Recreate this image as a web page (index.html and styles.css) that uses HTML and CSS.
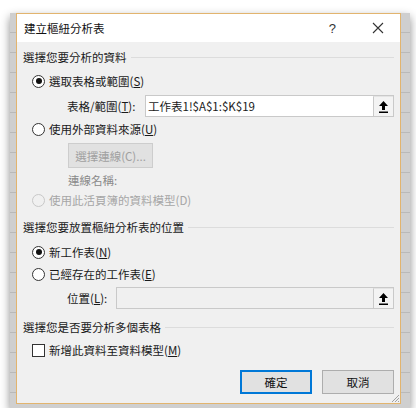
FILE: index.html
```html
<!DOCTYPE html>
<html lang="zh-Hant">
<head>
    <meta charset="UTF-8">
    <title>建立樞紐分析表</title>
    <link rel="stylesheet" href="styles.css">
</head>
<body>

    <div class="shot">
        <div class="dialog">
            <div class="titlebar">
                <span class="title">建立樞紐分析表</span>
                <span class="help">?</span>
                <svg class="close" width="12" height="12" viewBox="0 0 12 12">
                    <path d="M1 1 L11 11 M11 1 L1 11" stroke="#333" stroke-width="1.1" fill="none"/>
                </svg>
            </div>

            <div class="content">
                <div class="group"><span>選擇您要分析的資料</span></div>

                <div class="row r-sel">
                    <span class="radio checked"></span>
                    <span>選取表格或範圍(<u>S</u>)</span>
                </div>

                <div class="field f-range">
                    <span class="lbl">表格/範圍(<u>T</u>):</span>
                    <div class="input">
                        <span class="val">工作表1!$A$1:$K$19</span>
                        <span class="pick">
                            <svg width="9" height="12" viewBox="0 0 9 12"><path d="M4.5 0 L9 5 L6 5 L6 9 L3 9 L3 5 L0 5 Z M0 10.5 H9 V12 H0 Z" fill="#000"/></svg>
                        </span>
                    </div>
                </div>

                <div class="row r-ext">
                    <span class="radio"></span>
                    <span>使用外部資料來源(<u>U</u>)</span>
                </div>

                <button class="btn-conn" disabled>選擇連線(C)...</button>

                <div class="conn-name">連線名稱:</div>

                <div class="row r-model off">
                    <span class="radio"></span>
                    <span>使用此活頁簿的資料模型(D)</span>
                </div>

                <div class="group g-place"><span>選擇您要放置樞紐分析表的位置</span></div>

                <div class="row r-new">
                    <span class="radio checked"></span>
                    <span>新工作表(<u>N</u>)</span>
                </div>

                <div class="row r-exist">
                    <span class="radio"></span>
                    <span>已經存在的工作表(<u>E</u>)</span>
                </div>

                <div class="field f-loc">
                    <span class="lbl">位置(<u>L</u>):</span>
                    <div class="input disabled">
                        <span class="val"></span>
                        <span class="pick">
                            <svg width="9" height="12" viewBox="0 0 9 12"><path d="M4.5 0 L9 5 L6 5 L6 9 L3 9 L3 5 L0 5 Z M0 10.5 H9 V12 H0 Z" fill="#000"/></svg>
                        </span>
                    </div>
                </div>

                <div class="group g-multi"><span>選擇您是否要分析多個表格</span></div>

                <div class="row r-check">
                    <span class="check"></span>
                    <span>新增此資料至資料模型(<u>M</u>)</span>
                </div>

                <div class="actions">
                    <button class="btn default">確定</button>
                    <button class="btn">取消</button>
                </div>
            </div>

            <svg class="grip" width="10" height="10" viewBox="0 0 10 10">
                <path d="M9 2 L2 9 M9 5 L5 9 M9 8 L8 9" stroke="#a0a0a0" stroke-width="1" fill="none"/>
            </svg>
        </div>
    </div>

</body>
</html>
```

FILE: styles.css
```css
body {
    margin: 0;
    padding: 13px 0 0 10px;
    background-color: #fff;
    font-family: "Noto Sans CJK TC", "Noto Sans", sans-serif;
    font-size: 11.5px;
    color: #1a1a1a;
}
.shot {
    width: 389px;
    height: 395px;
    padding: 0 5px 0 6px;
    background-color: #cfcfcf;
    background-image: repeating-linear-gradient(180deg, transparent 0, transparent 19px, #b9b9b9 19px, #b9b9b9 20px);
    box-shadow: 0 4px 9px rgba(0, 0, 0, 0.45);
}
.dialog {
    position: relative;
    box-sizing: border-box;
    width: 385px;
    height: 391px;
    border: 1px solid #e2b46e;
    background-color: #f0f0f0;
}
.titlebar {
    display: flex;
    align-items: center;
    height: 28px;
    background-color: #fff;
    padding: 0 0 0 7px;
}
.title {
    flex: 1;
    font-size: 11.5px;
    color: #111;
}
.help {
    font-family: "Liberation Sans", sans-serif;
    font-size: 13px;
    color: #333;
    margin-right: 36px;
}
.close {
    margin-right: 16px;
}
.content {
    padding: 7px 6px 8px 6px;
}
.group {
    display: flex;
    align-items: center;
    height: 16px;
    line-height: 16px;
}
.group::after {
    content: "";
    flex: 1;
    height: 1px;
    background-color: #dcdcdc;
    margin-left: 4px;
}
.row {
    display: flex;
    align-items: center;
    height: 16px;
    line-height: 16px;
    padding-left: 9px;
}
.row u, .lbl u { text-decoration: underline; }
.radio {
    box-sizing: border-box;
    width: 13px;
    height: 13px;
    border: 1px solid #333;
    border-radius: 50%;
    background: #fff;
    margin-right: 4px;
    position: relative;
}
.radio.checked::after {
    content: "";
    position: absolute;
    left: 2.5px;
    top: 2.5px;
    width: 6px;
    height: 6px;
    border-radius: 50%;
    background: #111;
}
.off { color: #a6a6a6; }
.off .radio { border-color: #c8c8c8; background: #f0f0f0; }
.check {
    box-sizing: border-box;
    width: 13px;
    height: 13px;
    border: 1px solid #333;
    background: #fff;
    margin-right: 4px;
}
.r-sel { margin-top: 8px; }
.field {
    display: flex;
    align-items: center;
    height: 22px;
    padding-left: 44px;
}
.f-range { margin-top: 6px; }
.f-range .lbl { width: 78px; }
.f-loc { margin-top: 5px; }
.f-loc .lbl { width: 49px; }
.input {
    flex: 1;
    display: flex;
    box-sizing: border-box;
    height: 22px;
    border: 1px solid #c9c9c9;
    background: #fff;
}
.input.disabled { background: #f0f0f0; }
.val {
    flex: 1;
    line-height: 20px;
    padding-left: 2px;
    font-size: 11.5px;
}
.pick {
    box-sizing: border-box;
    width: 20px;
    height: 20px;
    border-left: 1px solid #c9c9c9;
    border-top: 1px solid #e4e4e4;
    background: #f3f3f3;
    display: flex;
    align-items: center;
    justify-content: center;
}
.r-ext { margin-top: 4px; }
.btn-conn {
    display: block;
    box-sizing: border-box;
    width: 85px;
    height: 25px;
    margin: 6px 0 0 45px;
    border: 1px solid #cdcdcd;
    background: #e1e1e1;
    color: #a0a0a0;
    font-family: inherit;
    font-size: 11.5px;
    padding: 0;
}
.conn-name {
    height: 16px;
    line-height: 16px;
    margin: 4px 0 0 45px;
    color: #8a8a8a;
}
.r-model { margin-top: 4px; }
.g-place { margin-top: 11px; }
.r-new { margin-top: 9px; }
.r-exist { margin-top: 6px; }
.g-multi { margin-top: 10px; }
.r-check { margin-top: 7px; }
.actions {
    display: flex;
    justify-content: flex-end;
    gap: 10px;
    margin-top: 12px;
}
.btn {
    box-sizing: border-box;
    width: 72px;
    height: 24px;
    border: 1px solid #adadad;
    background: #e1e1e1;
    font-family: inherit;
    font-size: 11.5px;
    color: #111;
    padding: 0;
}
.btn.default {
    border: 2px solid #0078d7;
}
.grip {
    position: absolute;
    right: 0;
    bottom: 0;
}
```
